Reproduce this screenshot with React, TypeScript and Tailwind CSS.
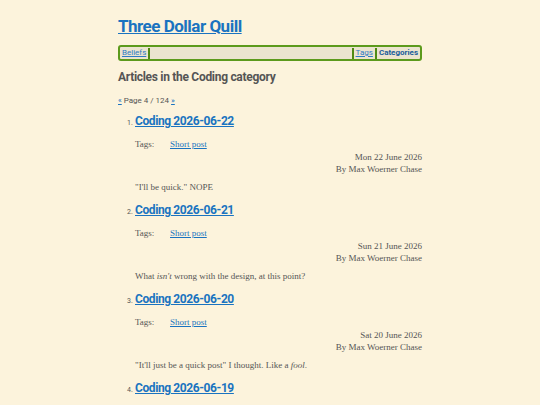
import React from "react";

const posts = [
  { n: 1, title: "Coding 2026-06-22", date: "Mon 22 June 2026", body: <>"I'll be quick." NOPE</> },
  { n: 2, title: "Coding 2026-06-21", date: "Sun 21 June 2026", body: <>What <em>isn't</em> wrong with the design, at this point?</> },
  { n: 3, title: "Coding 2026-06-20", date: "Sat 20 June 2026", body: <>"It'll just be a quick post" I thought. Like a <em>fool</em>.</> },
  { n: 4, title: "Coding 2026-06-19", date: "Fri 19 June 2026", body: <>More.</> },
];

const head = { fontFamily: "Roboto, 'Open Sans', sans-serif" };
const serif = { fontFamily: "'Liberation Serif', serif" };

export default function App() {
  return (
    <div className="min-h-[405px] bg-[#fcf3dc] text-[#555]">
      <div className="mx-auto w-[304px] pt-[14px]">
        <h1 className="text-[17px] font-bold leading-[24px] tracking-[-0.5px]" style={head}>
          <a href="#" className="text-[#1a73c0] underline">Three Dollar Quill</a>
        </h1>
        <nav className="mt-[7px] flex h-[16px] items-center rounded-[3px] border-2 border-[#5c9a1c] bg-[#ebe4cf] px-[2px] text-[8px] leading-none" style={head}>
          <a href="#" className="text-[#2f7bc4] underline">Beliefs</a>
          <span className="ml-[2px] h-[11px] w-[2px] bg-[#4f8a14]" />
          <span className="flex-1" />
          <span className="mr-[2px] h-[11px] w-[2px] bg-[#4f8a14]" />
          <a href="#" className="text-[#2f7bc4] underline">Tags</a>
          <span className="mx-[2px] h-[11px] w-[2px] bg-[#4f8a14]" />
          <span className="font-bold text-[#1a5d9a]">Categories</span>
        </nav>
        <h2 className="mt-[7px] text-[12px] font-bold leading-[18px] tracking-[-0.3px] text-[#555]" style={head}>
          Articles in the Coding category
        </h2>
        <p className="mt-[10px] text-[8px] leading-[10px] text-[#555]" style={head}>
          <a href="#" className="text-[#1a73c0] underline">«</a> Page 4 / 124{" "}
          <a href="#" className="text-[#1a73c0] underline">»</a>
        </p>
        <ol className="mt-[7px] pl-[17px]">
          {posts.map((p) => (
            <li key={p.n} className="mb-[10px]">
              <div className="flex items-baseline">
                <span className="w-[7px] -ml-[8px] mr-[1px] text-[7px] text-[#555]" style={head}>{p.n}.</span>
                <a href="#" className="text-[12px] font-bold leading-[16px] tracking-[-0.4px] text-[#1a73c0] underline" style={head}>{p.title}</a>
              </div>
              <div className="mt-[10px] flex text-[9px] leading-[10px]" style={serif}>
                <span className="w-[35px]">Tags:</span>
                <a href="#" className="text-[#1a73c0] underline">Short post</a>
              </div>
              <div className="mt-[2px] text-right text-[9px] leading-[12px]" style={serif}>
                <div>{p.date}</div>
                <div>By Max Woerner Chase</div>
              </div>
              <p className="mt-[7px] text-[9px] leading-[10px]" style={serif}>{p.body}</p>
            </li>
          ))}
        </ol>
      </div>
    </div>
  );
}
